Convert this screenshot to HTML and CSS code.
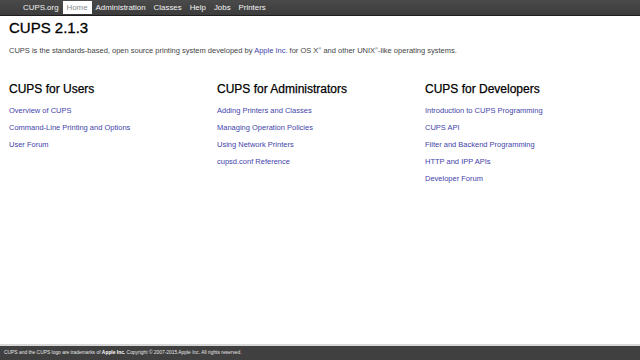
FILE: index.html
```html
<!DOCTYPE html>
<html lang="en">
<head>
    <meta charset="UTF-8">
    <title>Home - CUPS 2.1.3</title>
    <link rel="stylesheet" href="styles.css">
</head>
<body>
    <div class="header">
        <ul class="nav">
            <li><a href="#">CUPS.org</a></li>
            <li class="active"><a href="#">Home</a></li>
            <li><a href="#">Administration</a></li>
            <li><a href="#">Classes</a></li>
            <li><a href="#">Help</a></li>
            <li><a href="#">Jobs</a></li>
            <li><a href="#">Printers</a></li>
        </ul>
    </div>

    <div class="body">
        <h1>CUPS 2.1.3</h1>
        <p class="intro">CUPS is the standards-based, open source printing system developed by <a href="#">Apple Inc.</a> for OS X<sup>®</sup> and other UNIX<sup>®</sup>-like operating systems.</p>

        <div class="columns">
            <div class="col">
                <h2>CUPS for Users</h2>
                <p><a href="#">Overview of CUPS</a></p>
                <p><a href="#">Command-Line Printing and Options</a></p>
                <p><a href="#">User Forum</a></p>
            </div>
            <div class="col">
                <h2>CUPS for Administrators</h2>
                <p><a href="#">Adding Printers and Classes</a></p>
                <p><a href="#">Managing Operation Policies</a></p>
                <p><a href="#">Using Network Printers</a></p>
                <p><a href="#">cupsd.conf Reference</a></p>
            </div>
            <div class="col">
                <h2>CUPS for Developers</h2>
                <p><a href="#">Introduction to CUPS Programming</a></p>
                <p><a href="#">CUPS API</a></p>
                <p><a href="#">Filter and Backend Programming</a></p>
                <p><a href="#">HTTP and IPP APIs</a></p>
                <p><a href="#">Developer Forum</a></p>
            </div>
        </div>
    </div>

    <div class="footer">CUPS and the CUPS logo are trademarks of <b>Apple Inc.</b> Copyright &copy; 2007-2015 Apple Inc. All rights reserved.</div>
</body>
</html>
```

FILE: styles.css
```css
html, body {
    margin: 0;
    padding: 0;
}

body {
    font-family: "Liberation Sans", Arial, sans-serif;
    color: #222;
    background: white;
    min-height: 100vh;
    display: flex;
    flex-direction: column;
}

a {
    color: #4444aa;
    text-decoration: none;
}

.header {
    background: linear-gradient(#4a4a4a, #3c3c3c);
    border-bottom: 1px solid #1e1e1e;
    height: 14px;
    padding-top: 1px;
    box-sizing: content-box;
}

.nav {
    list-style: none;
    margin: 0;
    padding: 0 0 0 19px;
    display: flex;
    height: 13px;
}

.nav li a {
    display: block;
    padding: 0 4px;
    line-height: 13px;
    font-size: 7.9px;
    color: #f4f4f4;
}

.nav li.active a {
    background: white;
    color: #888;
}

.body {
    padding: 0 9px;
    flex: 1;
}

h1 {
    font-size: 15px;
    font-weight: normal;
    line-height: 18px;
    margin: 3px 0 0;
    color: #000;
    -webkit-text-stroke: 0.3px #000;
}

.intro {
    font-size: 7.5px;
    line-height: 10px;
    margin: 9px 0 0;
    color: #444;
}

.intro sup {
    font-size: 4px;
    vertical-align: 3px;
    line-height: 0;
}

.columns {
    display: grid;
    grid-template-columns: 208px 208px 1fr;
    margin-top: 26px;
}

h2 {
    font-size: 12px;
    font-weight: normal;
    line-height: 14px;
    margin: 0 0 6px;
    color: #000;
    -webkit-text-stroke: 0.25px #000;
}

.col p {
    font-size: 7.5px;
    line-height: 17px;
    margin: 0;
}

.footer {
    background: #404040;
    border-top: 2px solid #d8d8d8;
    height: 14px;
    line-height: 14px;
    padding-left: 4px;
    font-size: 4.9px;
    color: #e6e6e6;
}

.footer b {
    color: white;
}
```
